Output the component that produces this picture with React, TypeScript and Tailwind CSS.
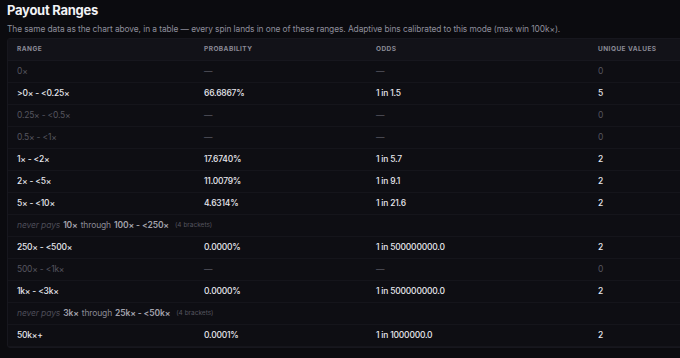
import React from 'react';

type Row =
  | { kind: 'row'; range: string; prob: string; odds: string; uniq: string; hit: boolean }
  | { kind: 'gap'; from: string; to: string; count: number };

const rows: Row[] = [
  { kind: 'row', range: '0×', prob: '—', odds: '—', uniq: '0', hit: false },
  { kind: 'row', range: '>0× - <0.25×', prob: '66.6867%', odds: '1 in 1.5', uniq: '5', hit: true },
  { kind: 'row', range: '0.25× - <0.5×', prob: '—', odds: '—', uniq: '0', hit: false },
  { kind: 'row', range: '0.5× - <1×', prob: '—', odds: '—', uniq: '0', hit: false },
  { kind: 'row', range: '1× - <2×', prob: '17.6740%', odds: '1 in 5.7', uniq: '2', hit: true },
  { kind: 'row', range: '2× - <5×', prob: '11.0079%', odds: '1 in 9.1', uniq: '2', hit: true },
  { kind: 'row', range: '5× - <10×', prob: '4.6314%', odds: '1 in 21.6', uniq: '2', hit: true },
  { kind: 'gap', from: '10×', to: '100× - <250×', count: 4 },
  { kind: 'row', range: '250× - <500×', prob: '0.0000%', odds: '1 in 500000000.0', uniq: '2', hit: true },
  { kind: 'row', range: '500× - <1k×', prob: '—', odds: '—', uniq: '0', hit: false },
  { kind: 'row', range: '1k× - <3k×', prob: '0.0000%', odds: '1 in 500000000.0', uniq: '2', hit: true },
  { kind: 'gap', from: '3k×', to: '25k× - <50k×', count: 4 },
  { kind: 'row', range: '50k×+', prob: '0.0001%', odds: '1 in 1000000.0', uniq: '2', hit: true },
];

const cols = 'grid grid-cols-[187px_172px_222px_1fr]';

export default function App() {
  return (
    <div className="w-[680px] h-[358px] overflow-hidden bg-[#0b0b0f] font-['Inter',sans-serif] pl-[7px] pt-0">
      <h2 className="text-[13px] font-bold tracking-[-0.02em] text-[#f2f2f6] leading-[20px]">Payout Ranges</h2>
      <p className="mt-[3px] text-[8.4px] tracking-[-0.01em] text-[#8e8e9b] leading-[12px] whitespace-nowrap">
        The same data as the chart above, in a table — every spin lands in one of these ranges. Adaptive bins calibrated to
        this mode (max win 100k×).
      </p>

      <div className="mt-[3px] w-[740px] rounded-[3px] border border-[#17171e] bg-[#0e0e13]">
        <div className={`${cols} h-[22px] items-center bg-[#121218] border-b border-[#17171e]`}>
          {['Range', 'Probability', 'Odds', 'Unique Values'].map((h) => (
            <div key={h} className="pl-[9px] text-[6.5px] font-bold uppercase tracking-[0.07em] text-[#8a8a96]">
              {h}
            </div>
          ))}
        </div>

        {rows.map((r, i) =>
          r.kind === 'row' ? (
            <div
              key={i}
              className={`${cols} h-[22px] items-center border-b border-[#15151b] text-[8.5px] tracking-[-0.025em] ${
                r.hit ? 'text-[#e8e8ee] font-medium' : 'text-[#55555f]'
              }`}
            >
              <div className="pl-[9px]">{r.range}</div>
              <div className="pl-[9px]">{r.prob}</div>
              <div className="pl-[9px]">{r.odds}</div>
              <div className="pl-[9px]">{r.uniq}</div>
            </div>
          ) : (
            <div
              key={i}
              className="h-[22px] flex items-center border-b border-[#15151b] pl-[9px] text-[8.5px] tracking-[-0.015em]"
            >
              <span className="italic text-[#4c4c57] mr-[3px]">never pays</span>
              <span className="font-semibold text-[#a3a3ad]">{r.from}</span>
              <span className="text-[#8a8a95] mx-[3px]">through</span>
              <span className="font-semibold text-[#a3a3ad]">{r.to}</span>
              <span className="text-[6.5px] tracking-normal text-[#55555f] ml-[6px]">({r.count} brackets)</span>
            </div>
          )
        )}
      </div>
    </div>
  );
}
